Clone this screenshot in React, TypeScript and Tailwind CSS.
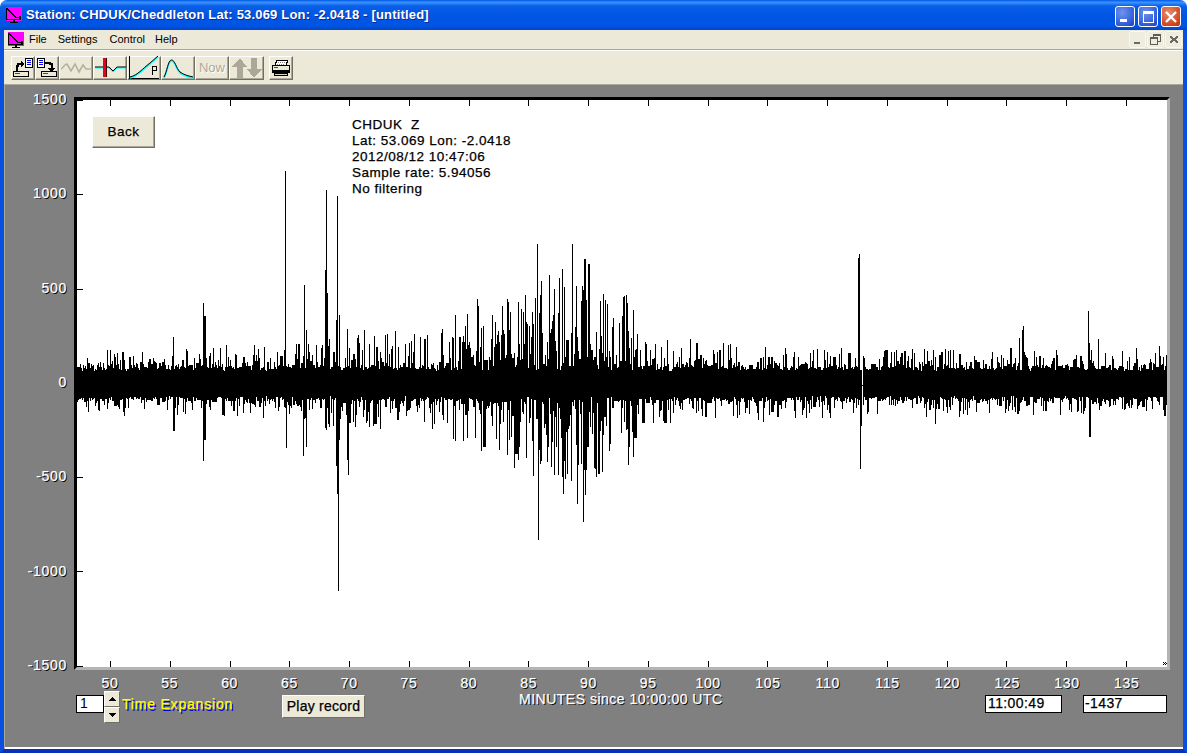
import React from 'react'

// seismic trace, one column per pixel
const envPts: [number, number][] = [
	[76, 1], [200, 1], [210, 1.2], [300, 1.3], [322, 1.5], [345, 1.75], [440, 1.8], [470, 2.6],
	[540, 3.6], [585, 3.9], [625, 3], [642, 1.6], [665, 1.55], [800, 1.2], [850, 1.1], [1167, 1],
]

const spikes: [number, number | null, number | null][] = [
	[173, 337, 431], [174, null, 431], [203, 303, 461], [204, 316, 440], [205, 316, 440],
	[285, 171, null], [286, null, 448], [303, null, 456], [304, 285, null], [306, 330, 447],
	[325, 270, 428], [326, 190, 430], [327, 293, null], [337, 196, 494], [338, null, 591], [336, 320, 466],
	[339, 315, 440], [347, 329, 460], [348, null, 475], [364, 330, null],
	[455, 315, 441], [477, 299, null], [481, null, 451], [507, null, 455], [508, 302, null], [518, 302, null],
	[525, 295, null], [526, null, 458], [537, 244, null], [538, null, 540], [547, null, 462], [549, 275, null],
	[551, null, 467], [562, 269, null], [563, null, 494], [571, null, 481], [572, 244, null], [576, 286, null],
	[577, null, 504], [581, null, 464], [583, 290, 522], [584, 259, 470], [585, 259, 495], [586, 300, 470],
	[602, null, 472], [603, 294, null], [622, 316, null], [628, null, 465], [633, 310, 457],
	[841, 348, null], [858, 258, 405], [859, 254, 400], [860, 370, 469], [861, 370, 426], [862, 385, 386], [896, 350, null],
	[935, null, 424], [953, 350, null], [1019, 338, null], [1022, 330, null], [1023, 326, null],
	[1088, 311, null], [1089, 343, 437], [1090, 360, 437], [1098, 339, null], [1159, 346, null],
]

function buildTrace() {
	let seed = 48271
	const rnd = () => {
		seed = (seed * 16807) % 2147483647
		return seed / 2147483647
	}
	const amp = (x: number) => {
		for (let i = 1; i < envPts.length; i++) {
			if (x <= envPts[i][0]) {
				const [x0, a0] = envPts[i - 1]
				const [x1, a1] = envPts[i]
				return a0 + ((a1 - a0) * (x - x0)) / (x1 - x0)
			}
		}
		return 1
	}
	const tops: Record<number, number> = {}
	const bots: Record<number, number> = {}
	let prevUp = 0
	let prevDn = 0
	for (let x = 77; x < 1167; x++) {
		const m = amp(x)
		const p = 3 - 0.42 * (m - 1)
		let up = 12 + 5 * rnd() + Math.pow(rnd(), p) * 18 * Math.pow(m, 1.3)
		let dn = 12 + 5 * rnd() + Math.pow(rnd(), p) * 16 * Math.pow(m, 1.3)
		// a few runs of two columns
		if (rnd() < 0.15) up = prevUp
		if (rnd() < 0.15) dn = prevDn
		prevUp = up
		prevDn = dn
		tops[x] = Math.round(383 - up)
		bots[x] = Math.round(384 + dn)
	}
	spikes.forEach(([x, t, b]) => {
		if (t !== null) tops[x] = t
		if (b !== null) bots[x] = b
	})
	let d = ''
	for (let x = 77; x < 1167; x++) {
		d += `M${x + 0.5} ${tops[x]}V${bots[x]}`
	}
	return d
}

const tracePath = buildTrace()

const xTicks = Array.from({ length: 18 }, (_, i) => Math.round(110 + i * 59.76))
const yTicks = [194, 289, 477, 571]
const yLabels = ['1500', '1000', '500', '0', '-500', '-1000', '-1500']
const xLabels = Array.from({ length: 18 }, (_, i) => String(50 + i * 5))

const AppLogo = () => (
	<svg width="16" height="17" viewBox="0 0 16 17" shapeRendering="crispEdges">
		<rect x="0" y="0" width="16" height="14" fill="#ff00ff" />
		<path d="M0 1H1V12H15V13H0ZM1 1H2V2H3V3H4V4H5V5H6V6H7V7H8V8H9V9H10V10H13V9H15V12H13V11H9V10H8V9H7V8H6V7H5V6H4V5H3V4H2V3H1Z" fill="#000" />
		<path d="M7 13H9V15H12V16H4V15H7Z" fill="#000" />
	</svg>
)

const ToolButton = ({ w, children }: { w: number; children: React.ReactNode }) => (
	<div
		style={{ width: w }}
		className="h-[24px] flex items-center justify-center border-t border-l border-t-white border-l-white border-r border-b border-r-[#716f64] border-b-[#716f64] shadow-[inset_-1px_-1px_0_#aca899] bg-[#ece9d8]"
	>
		{children}
	</div>
)

const IconOpen = () => (
	<svg width="22" height="20" viewBox="0 0 22 20" shapeRendering="crispEdges">
		<rect x="13.5" y="0.5" width="7" height="9" fill="#fff" stroke="#000" />
		<path d="M15 2.5h4M15 4.5h4M15 6.5h4" stroke="#0000ff" />
		<path d="M5 13V8h1V6h5" fill="none" stroke="#000" strokeWidth="2" />
		<path d="M9 3h1v1h1v1h1v2h-1v1h-1v1H9Z" fill="#000" />
		<rect x="1.5" y="13.5" width="15" height="5" fill="#ece9d8" stroke="#000" />
		<rect x="3" y="15" width="5" height="1" fill="#ff0000" />
	</svg>
)

const IconSave = () => (
	<svg width="22" height="20" viewBox="0 0 22 20" shapeRendering="crispEdges">
		<rect x="1.5" y="0.5" width="7" height="9" fill="#fff" stroke="#000" />
		<path d="M3 2.5h4M3 4.5h4M3 6.5h4" stroke="#0000ff" />
		<path d="M9 5h5v1h2v5" fill="none" stroke="#000" strokeWidth="2" />
		<path d="M12 10h7v1h-1v1h-1v1h-1v1h-1v-1h-1v-1h-1v-1h-1Z" fill="#000" />
		<rect x="5.5" y="13.5" width="15" height="5" fill="#ece9d8" stroke="#000" />
		<rect x="7" y="15" width="5" height="1" fill="#ff0000" />
	</svg>
)

const IconWave = () => (
	<svg width="31" height="14" viewBox="0 0 31 14">
		<path d="M0 8C3 6 4 3 6 3L10 10L14 3L18 11L22 4L25 8H31" fill="none" stroke="#b4b1a0" strokeWidth="1.6" />
	</svg>
)

const IconPick = () => (
	<svg width="32" height="22" viewBox="0 0 32 22">
		<path d="M1 11H15L19 15L23 11H32" fill="none" stroke="#00ffff" strokeWidth="1" />
		<path d="M1 10H15L19 14L23 10H32" fill="none" stroke="#000" strokeWidth="1" />
		<rect x="9" y="1" width="3" height="19" fill="#e8001c" shapeRendering="crispEdges" />
		<rect x="12" y="1" width="1" height="19" fill="#400000" shapeRendering="crispEdges" />
	</svg>
)

const IconRamp = () => (
	<svg width="32" height="24" viewBox="0 0 32 24">
		<path d="M1 0V22.5H31" fill="none" stroke="#000" strokeWidth="1" shapeRendering="crispEdges" />
		<path d="M2 22C10 20 14 14 22 8L30 1" fill="none" stroke="#00ffff" strokeWidth="1.6" />
		<path d="M2 21C10 19 14 13 22 7L30 0" fill="none" stroke="#000" strokeWidth="1" />
		<path d="M24.5 10V19M24.5 10.5H28.5V14.5H24.5" fill="none" stroke="#000" strokeWidth="1" shapeRendering="crispEdges" />
	</svg>
)

const IconPeak = () => (
	<svg width="32" height="22" viewBox="0 0 32 22">
		<path d="M2 21C5 16 6 4 9.5 4C13 4 14 12 18 16C22 19 27 20 31 21" fill="none" stroke="#00ffff" strokeWidth="1.6" />
		<path d="M2 20C5 15 6 3 9.5 3C13 3 14 11 18 15C22 18 27 19 31 20" fill="none" stroke="#000" strokeWidth="1" />
	</svg>
)

const IconArrows = () => (
	<svg width="32" height="22" viewBox="0 0 32 22" shapeRendering="crispEdges">
		<path d="M9 1L16 10H12V21H6V10H1Z" fill="#aca899" />
		<path d="M20 1H26V12H31L23 21L16 12H20Z" fill="#aca899" />
	</svg>
)

const IconPrinter = () => (
	<svg width="20" height="18" viewBox="0 0 20 18" shapeRendering="crispEdges">
		<path d="M6 1H17L15 6H4Z" fill="#fff" stroke="#000" />
		<path d="M7 3h7M6 5h7" stroke="#808080" strokeDasharray="1 1" />
		<rect x="1.5" y="6.5" width="17" height="7" fill="#ece9d8" stroke="#000" />
		<rect x="3" y="8" width="4" height="1" fill="#ff0000" />
		<rect x="1" y="11" width="18" height="3" fill="#000" />
		<rect x="3.5" y="14.5" width="13" height="2" fill="#d8d4c4" stroke="#000" />
	</svg>
)

const Spin = ({ up }: { up?: boolean }) => (
	<div className="w-[16px] h-[16px] flex items-center justify-center bg-[#ece9d8] border-t border-l border-t-white border-l-white border-r border-b border-r-[#716f64] border-b-[#716f64]">
		<svg width="7" height="4" viewBox="0 0 7 4" shapeRendering="crispEdges">
			<path d={up ? 'M3 0H4V1H5V2H6V3H7V4H0V3H1V2H2V1H3Z' : 'M0 0H7V1H6V2H5V3H4V4H3V3H2V2H1V1H0Z'} fill="#000" />
		</svg>
	</div>
)

const WinBtn = ({ kind }: { kind: 'min' | 'max' | 'close' }) => (
	<div
		className={
			kind === 'close'
				? 'w-[20px] h-[21px] rounded-[3px] border border-white flex items-center justify-center bg-[radial-gradient(circle_at_35%_30%,#e58d70,#d2461f_70%,#b8330f)]'
				: 'w-[20px] h-[21px] rounded-[3px] border border-white flex items-center justify-center bg-[radial-gradient(circle_at_35%_30%,#6f93ee,#2f5bd8_70%,#1c3fb8)]'
		}
	>
		{kind === 'min' && (
			<svg width="14" height="14" viewBox="0 0 14 14" shapeRendering="crispEdges">
				<rect x="2" y="9" width="7" height="3" fill="#fff" />
			</svg>
		)}
		{kind === 'max' && (
			<svg width="14" height="14" viewBox="0 0 14 14" shapeRendering="crispEdges">
				<path d="M2 1H13V13H2ZM3 4V12H12V4Z" fill="#fff" fillRule="evenodd" />
			</svg>
		)}
		{kind === 'close' && (
			<svg width="14" height="14" viewBox="0 0 14 14">
				<path d="M2 2L12 12M12 2L2 12" stroke="#fff" strokeWidth="2.4" />
			</svg>
		)}
	</div>
)

const MdiBtn = ({ kind }: { kind: 'min' | 'restore' | 'close' }) => (
	<div className="w-[17px] h-[17px] rounded-[2px] bg-[#efede0] border border-[#f8f7f2] flex items-center justify-center">
		<svg width="11" height="11" viewBox="0 0 11 11" shapeRendering="crispEdges">
			{kind === 'min' && <rect x="2" y="8" width="6" height="2" fill="#6b6b63" />}
			{kind === 'restore' && (
				<path d="M3.5 3V0.5H10.5V7.5H8M0.5 3.5H7.5V10.5H0.5ZM0.5 4.5H7.5M3.5 1.5H10.5" fill="none" stroke="#5e5e56" />
			)}
			{kind === 'close' && (
				<path d="M1 1H3V2H4V3H6V2H7V1H9V3H8V4H7V5H8V6H9V8H7V7H6V6H4V7H3V8H1V6H2V5H3V4H2V3H1Z" fill="#6b6b63" transform="translate(0.5 0.5)" />
			)}
		</svg>
	</div>
)

const App: React.FC = () => {
	return (
		<div className="w-[1187px] h-[753px] flex flex-col overflow-hidden bg-white font-['Liberation_Sans',Arial,sans-serif]">
			{/* title bar */}
			<div className="h-[30px] shrink-0 flex items-center pl-[6px] pr-[6px] rounded-t-[7px] bg-[linear-gradient(180deg,#0058e6_0%,#3a93ff_8%,#0a5fe8_20%,#0054e3_55%,#0055e5_85%,#0046c8_100%)]">
				<AppLogo />
				<span className="ml-[4px] text-[13px] font-bold text-white [text-shadow:1px_1px_0_#0f2d8c] tracking-[0.18px] whitespace-nowrap">
					Station: CHDUK/Cheddleton Lat: 53.069 Lon: -2.0418 - [untitled]
				</span>
				<div className="ml-auto flex gap-[3px] mt-[3px]">
					<WinBtn kind="min" />
					<WinBtn kind="max" />
					<WinBtn kind="close" />
				</div>
			</div>

			<div className="flex-1 flex flex-col border-x-[4px] border-b-[4px] border-x-[#0a4fe0] border-b-[#0831b8] min-h-0">
				{/* menu */}
				<div className="h-[20px] shrink-0 flex items-center bg-[#ece9d8] border-b border-b-[#aca899] text-[11px] text-black">
					<div className="ml-[4px] mt-[1px]">
						<AppLogo />
					</div>
					<span className="ml-[5px]">File</span>
					<span className="ml-[11px]">Settings</span>
					<span className="ml-[12px]">Control</span>
					<span className="ml-[10px]">Help</span>
					<div className="ml-auto flex gap-px mr-[1px]">
						<MdiBtn kind="min" />
						<MdiBtn kind="restore" />
						<MdiBtn kind="close" />
					</div>
				</div>

				{/* toolbar */}
				<div className="h-[35px] shrink-0 flex items-center pl-[7px] pt-px bg-[#ece9d8] border-t border-t-white border-b border-b-[#aca899]">
					<ToolButton w={24}><IconOpen /></ToolButton>
					<ToolButton w={24}><IconSave /></ToolButton>
					<ToolButton w={34}><IconWave /></ToolButton>
					<ToolButton w={34}><IconPick /></ToolButton>
					<ToolButton w={34}><IconRamp /></ToolButton>
					<ToolButton w={34}><IconPeak /></ToolButton>
					<ToolButton w={34}>
						<span className="text-[13px] text-[#aca899] [text-shadow:1px_1px_0_#fff]">Now</span>
					</ToolButton>
					<ToolButton w={35}><IconArrows /></ToolButton>
					<div className="w-[5px]" />
					<ToolButton w={24}><IconPrinter /></ToolButton>
				</div>

				{/* gray client area */}
				<div className="flex-1 min-h-0 flex flex-col bg-[#808080] border-l border-l-[#aca899] pt-[12px] text-white">
					<div className="flex shrink-0">
						<div className="w-[62px] h-[582px] -mt-[6px] flex flex-col justify-between items-end text-[14px] tracking-[0.7px] leading-[16px] [text-shadow:1px_1px_0_#000] [-webkit-text-stroke:0.25px_#fff]">
							{yLabels.map((l) => (
								<span key={l} className="h-[16px]">{l}</span>
							))}
						</div>
						<div className="ml-[7px] w-[1096px] h-[573px] relative bg-white border-l-[3px] border-t-[3px] border-l-black border-t-black border-r-[3px] border-b-[3px] border-r-[#b4b4b4] border-b-[#b4b4b4]">
							<svg
								className="absolute left-0 top-0"
								width="1090"
								height="567"
								viewBox="77 100 1090 567"
								shapeRendering="crispEdges"
							>
								<path d={tracePath} stroke="#000" strokeWidth="1" fill="none" />
								{xTicks.map((x) => (
									<path key={x} d={`M${x + 0.5} 100V106M${x + 0.5} 661V667`} stroke="#000" />
								))}
								{yTicks.map((y) => (
									<path key={y} d={`M77 ${y + 0.5}H83`} stroke="#000" />
								))}
								<path d="M77 100.5H83M77 666.5H83" stroke="#000" />
								<path d="M1163 662h1v1h-1zM1165 662h1v1h-1zM1164 663h1v1h-1zM1166 663h1v1h-1zM1163 664h1v1h-1zM1165 664h1v1h-1z" fill="#000" />
							</svg>
							<div className="relative flex items-start pl-[15px] pt-[16px]">
								<div className="w-[63px] h-[32px] flex items-center justify-center bg-[#ece9d8] text-[13.5px] tracking-[0.5px] text-black [-webkit-text-stroke:0.25px_#000] border-t border-l border-t-white border-l-white border-r border-b border-r-[#716f64] border-b-[#716f64] shadow-[inset_-1px_-1px_0_#aca899]">
									Back
								</div>
								<div className="ml-[197px] mt-[1px] text-[13.5px] leading-[16px] tracking-[0.5px] text-black [-webkit-text-stroke:0.25px_#000] whitespace-pre">
									<div>CHDUK  Z</div>
									<div>Lat: 53.069 Lon: -2.0418</div>
									<div>2012/08/12 10:47:06</div>
									<div>Sample rate: 5.94056</div>
									<div>No filtering</div>
								</div>
							</div>
						</div>
					</div>

					{/* x axis labels */}
					<div className="ml-[85px] w-[1057px] h-[16px] mt-[2px] flex justify-between text-[14px] tracking-[0.7px] leading-[16px] [text-shadow:1px_1px_0_#000] [-webkit-text-stroke:0.25px_#fff] shrink-0">
						{xLabels.map((l) => (
							<span key={l} className="w-[40px] text-center">{l}</span>
						))}
					</div>

					{/* bottom controls */}
					<div className="flex items-start pl-[71px] shrink-0">
						<div className="mt-[4px] w-[28px] h-[18px] bg-white border border-black text-black text-[14px] leading-[15px] pl-[3px]">1</div>
						<div className="flex flex-col">
							<Spin up />
							<Spin />
						</div>
						<span className="ml-[2px] mt-[5px] w-[112px] text-[14px] leading-[16px] tracking-[0.8px] text-[#ffff00] [text-shadow:1.5px_1.5px_0_#0000e0] [-webkit-text-stroke:0.25px_#ffff00] whitespace-nowrap">
							Time Expansion
						</span>
						<div className="ml-[48px] mt-[4px] w-[83px] h-[23px] flex items-center justify-center bg-[#ece9d8] text-black text-[14px] tracking-[0.25px] [-webkit-text-stroke:0.25px_#000] border-t border-l border-t-white border-l-white border-r border-b border-r-[#716f64] border-b-[#716f64]">
							Play record
						</div>
						<span className="ml-[154px] w-[206px] text-[14px] leading-[16px] tracking-[0.5px] [text-shadow:1px_1px_0_#000] [-webkit-text-stroke:0.25px_#fff] whitespace-nowrap">
							MINUTES since 10:00:00 UTC
						</span>
						<div className="ml-[260px] mt-[4px] w-[77px] h-[18px] bg-white border border-black text-black text-[14px] leading-[15px] pl-[2px] tracking-[0.4px] [-webkit-text-stroke:0.25px_#000]">11:00:49</div>
						<div className="ml-[21px] mt-[4px] w-[84px] h-[18px] bg-white border border-black text-black text-[14px] leading-[15px] pl-[1px] tracking-[0.4px] [-webkit-text-stroke:0.25px_#000]">-1437</div>
					</div>
					<div className="mt-auto h-[2px] bg-white shrink-0" />
				</div>
			</div>
		</div>
	)
}

export default App
